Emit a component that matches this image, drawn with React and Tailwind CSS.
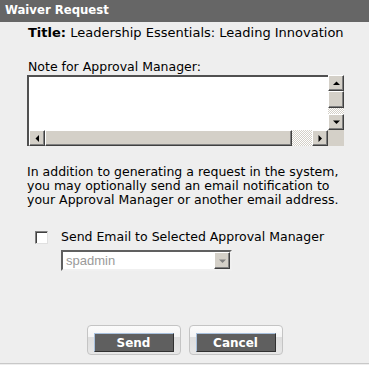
const Arrow = ({ dir, color = "#000" }) => {
  const pts = {
    up: "0,4 7,4 3.5,0.5",
    down: "0,0.5 7,0.5 3.5,4",
    left: "4,0 4,7 0.5,3.5",
    right: "0.5,0 0.5,7 4,3.5",
  }[dir];
  const horiz = dir === "up" || dir === "down";
  return (
    <svg width={horiz ? 7 : 4} height={horiz ? 4 : 7} viewBox={horiz ? "0 0 7 4" : "0 0 4 7"}>
      <polygon points={pts} fill={color} />
    </svg>
  );
};

const bevel =
  "bg-[#d4d0c8] border border-t-white border-l-white border-b-[#404040] border-r-[#404040] shadow-[inset_-1px_-1px_0_#808080]";

function ScrollBtn({ dir, className = "" }) {
  return (
    <div className={`${bevel} w-4 h-4 flex items-center justify-center ${className}`}>
      <Arrow dir={dir} />
    </div>
  );
}

const checker =
  "bg-[repeating-conic-gradient(#d4d0c8_0%_25%,#ffffff_0%_50%)] bg-[length:2px_2px]";

export default function App() {
  return (
    <div className="w-[369px] h-[365px] bg-[#eeeeee] flex flex-col font-['DejaVu_Sans',Verdana,sans-serif] text-[12.5px] text-black overflow-hidden">
      <div className="h-[22px] bg-[#666666] text-white font-bold text-[11.7px] px-[5px] flex items-center">
        Waiver Request
      </div>

      <div className="pl-[28px] pt-[4px] flex flex-col">
        <div className="h-[14px] leading-[14px] text-[13px]">
          <span className="font-bold">Title:</span> Leadership Essentials: Leading Innovation
        </div>

        <div className="h-[14px] leading-[14px] mt-[20px]">Note for Approval Manager:</div>

        <div className="mt-[1px] -ml-[1px] w-[317px] h-[71px] flex flex-col">
          <div className="flex h-[55px]">
            <div className="flex-1 bg-white border-t-2 border-l-2 border-t-[#505050] border-l-[#505050]" />
            <div className="w-4 flex flex-col">
              <ScrollBtn dir="up" />
              <div className={`${bevel} w-4 h-[17px]`} />
              <div className={`flex-1 ${checker}`} />
              <ScrollBtn dir="down" />
            </div>
          </div>
          <div className="flex h-4">
            <div className="flex-1 flex border-l-2 border-l-[#505050]">
              <ScrollBtn dir="left" className="w-[16px]" />
              <div className={`${bevel} flex-1`} />
              <div className={`w-[20px] ${checker}`} />
              <ScrollBtn dir="right" />
            </div>
            <div className="w-4 bg-[#d4d0c8]" />
          </div>
        </div>

        <p className="mt-[19px] leading-[14px] -ml-[1px]">
          In addition to generating a request in the system,
          <br />
          you may optionally send an email notification to
          <br />
          your Approval Manager or another email address.
        </p>

        <div className="mt-[23px] flex items-center">
          <div className="ml-[7px] w-[13px] h-[13px] bg-white border border-t-[#808080] border-l-[#808080] border-b-[#e0e0e0] border-r-[#e0e0e0] shadow-[inset_1px_1px_0_#404040]" />
          <span className="ml-[13px] leading-[14px]">Send Email to Selected Approval Manager</span>
        </div>

        <div className="mt-[6px] ml-[33px] w-[171px] h-[21px] flex bg-white border-2 border-t-[#606060] border-l-[#606060] border-b-[#f0f0f0] border-r-[#f0f0f0]">
          <span className="flex-1 pl-[3px] text-[13px] leading-[17px] text-[#9a9a9a] font-['Liberation_Sans',Arial,sans-serif]">
            spadmin
          </span>
          <div className={`${bevel} w-4 h-[17px] flex items-center justify-center`}>
            <Arrow dir="down" color="#808080" />
          </div>
        </div>
      </div>

      <div className="mt-[54px] flex justify-center gap-[8px]">
        {["Send", "Cancel"].map((label) => (
          <div
            key={label}
            className="w-[94px] h-[30px] rounded-[4px] border border-[#c4c4c4] bg-[linear-gradient(#fbfbfb_0%,#f4f4f4_40%,#dedede_41%,#e6e6e6_100%)] flex items-end justify-center pb-[2px]"
          >
            <button className="w-[80px] h-[19px] bg-[#5f5f5f] border border-t-[#a8c0dc] border-l-[#a8c0dc] border-b-[#303030] border-r-[#303030] text-white font-bold text-[12px] leading-[16px]">
              {label}
            </button>
          </div>
        ))}
      </div>

      <div className="mt-auto h-[2px] border-t border-[#c8c8c8]" />
    </div>
  );
}
